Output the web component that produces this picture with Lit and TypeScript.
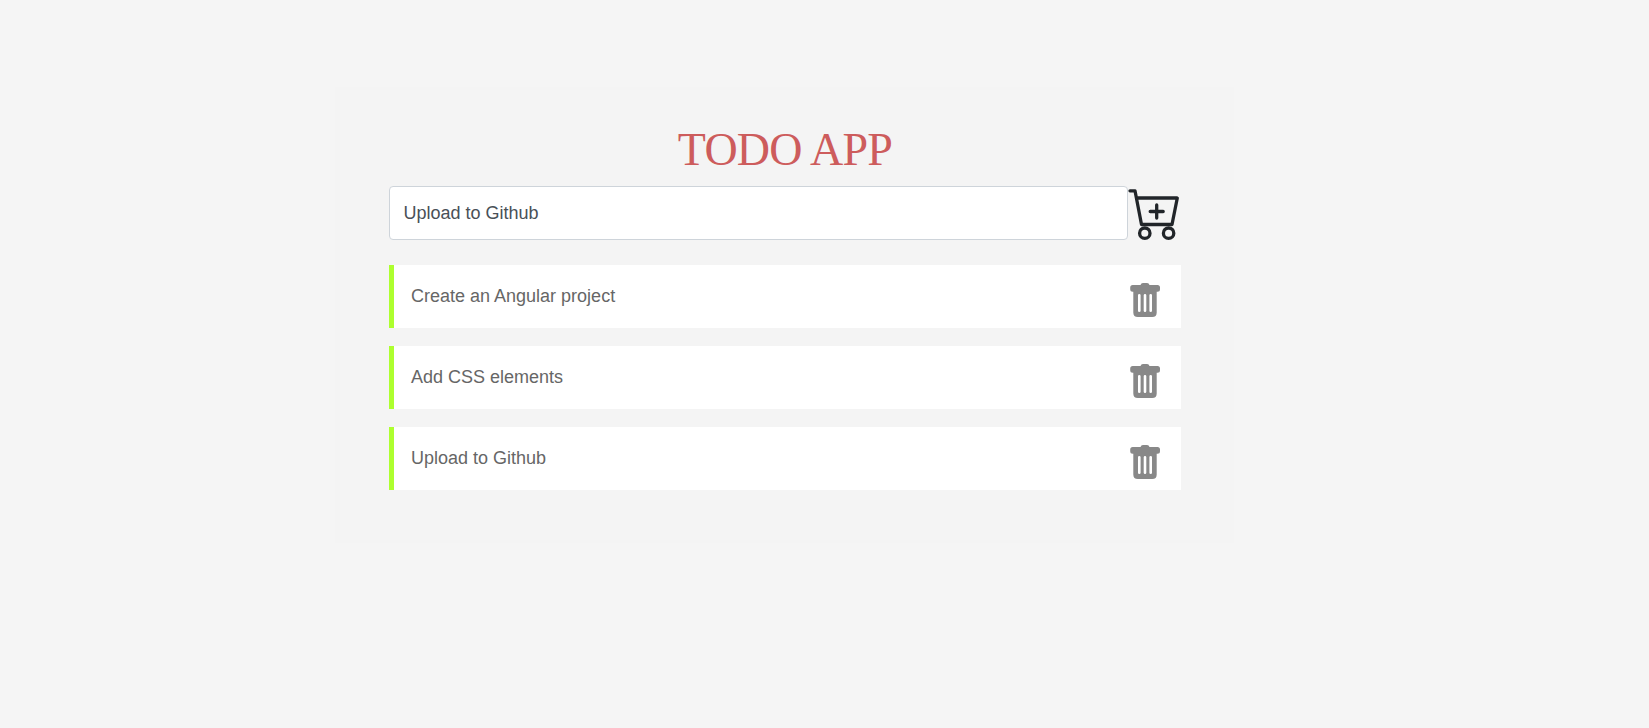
import { LitElement, html, css } from "lit";
import { customElement, state } from "lit/decorators.js";

@customElement("app-root")
class AppRoot extends LitElement {
  static styles = css`
    :host { display: block; min-height: 100vh; box-sizing: border-box; padding: 87px 0 0 335px; background: #f5f5f5; font: 18px/27px "Liberation Sans", Arial, sans-serif; }
    * { box-sizing: border-box; }
    .card { width: 899px; height: 456px; padding: 35px 53px 0 54px; background: #f4f4f4; }
    h1 { margin: 0; height: 64px; text-align: center; font: 400 46px/56px "Liberation Serif", "Times New Roman", serif; letter-spacing: -0.75px; color: #cd5c5c; }
    .entry { display: flex; height: 54px; margin-bottom: 25px; }
    input { width: 739px; height: 54px; padding: 0 13.5px; border: 1px solid #ced4da; border-radius: 4px; background: #fff; color: #495057; font: inherit; outline: none; }
    .cart { width: 53px; height: 56px; flex: none; }
    ul { list-style: none; margin: 0; padding: 0; display: grid; gap: 18px; }
    li { display: flex; justify-content: space-between; height: 63px; border-left: 5px solid #adff2f; padding: 17px 20px 0 17px; background: #fff; color: #666; }
    li span { padding-top: 1px; }
    .trash { width: 31px; height: 36px; fill: #888; }
  `;
  @state() items = ["Create an Angular project", "Add CSS elements", "Upload to Github"];

  render() {
    return html`<main class="card">
      <h1>TODO APP</h1>
      <div class="entry">
        <input .value=${"Upload to Github"} />
        <svg class="cart" viewBox="0 0 53 56" fill="none" stroke="#212529" stroke-width="3.300" stroke-linecap="round" stroke-linejoin="round">
          <path d="M2 4.800H7L13.500 38.500H44L49.300 12H9M28.700 19V32M22.200 25.500H35.200" />
          <circle cx="16.800" cy="47.200" r="5.200" /><circle cx="40.600" cy="47.200" r="5.200" />
        </svg>
      </div>
      <ul>${this.items.map((t) => html`<li><span>${t}</span>
        <svg class="trash" viewBox="0 0 31 36"><path fill-rule="evenodd" d="M10.500 3Q11 1 13 1H17Q19 1 19.500 3H27.500Q30 3 30 5.500V7.200Q30 9.700 27.500 9.700H26.700V30.500Q26.700 35 22.200 35H7.800Q3.300 35 3.300 30.500V9.700H2.700Q.2 9.700 .2 7.200V5.500Q.2 3 2.700 3ZM9.300 12Q8 12 8 13.300V28.700Q8 30 9.300 30T10.600 28.700V13.300Q10.600 12 9.300 12ZM15 12Q13.700 12 13.700 13.300V28.700Q13.700 30 15 30T16.300 28.700V13.300Q16.300 12 15 12ZM20.700 12Q19.400 12 19.400 13.300V28.700Q19.400 30 20.700 30T22 28.700V13.300Q22 12 20.700 12Z" /></svg></li>`)}</ul>
    </main>`;
  }
}
